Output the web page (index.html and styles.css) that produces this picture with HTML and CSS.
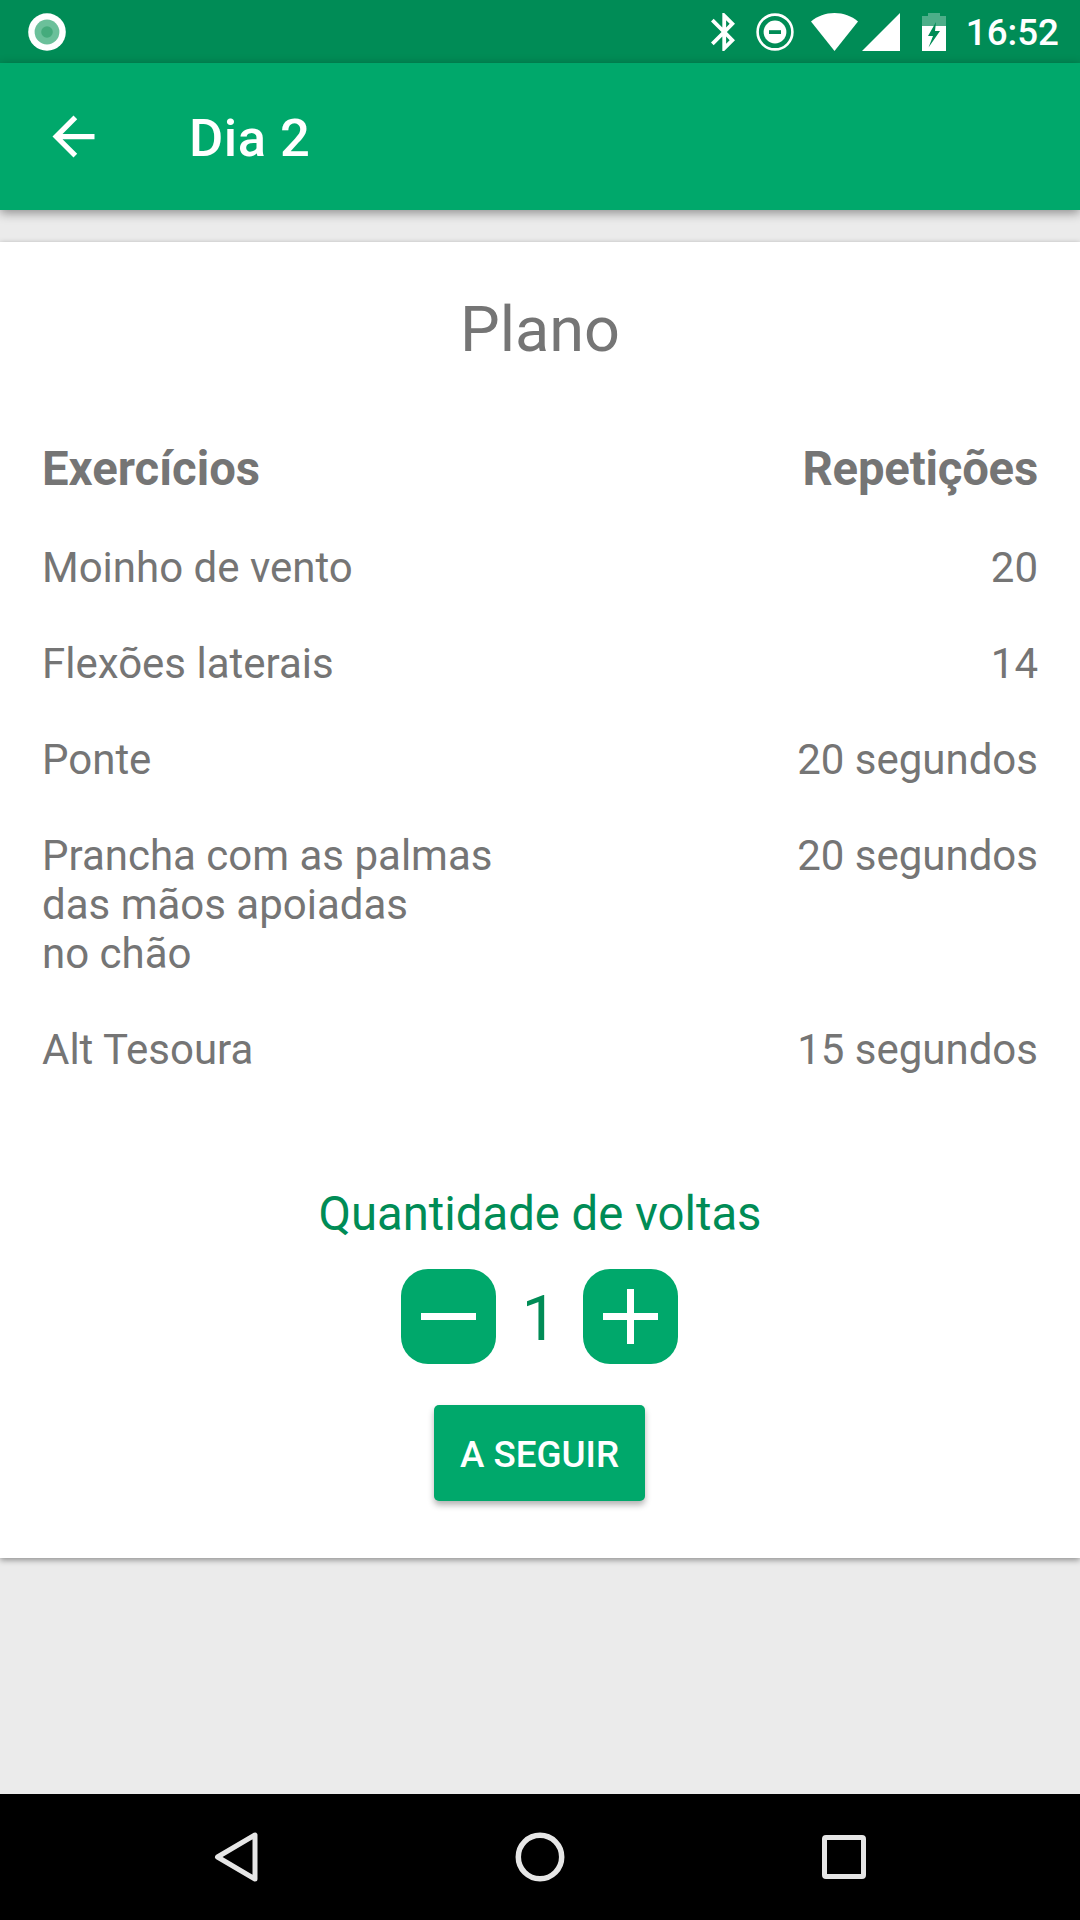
FILE: index.html
```html
<!DOCTYPE html>
<html lang="pt-BR">
<head>
    <meta charset="UTF-8">
    <meta name="viewport" content="width=device-width, initial-scale=1.0">
    <title>Dia 2</title>
    <link rel="stylesheet" href="styles.css">
</head>
<body>
    <div class="status-bar">
        <svg class="icon-record" width="38" height="38" viewBox="0 0 38 38">
            <circle cx="19" cy="19" r="18.8" fill="#fff"/>
            <circle cx="19" cy="19" r="12.4" fill="#6bc09a"/>
            <circle cx="19" cy="19" r="5.8" fill="#45ab7c"/>
        </svg>
        <div class="status-icons">
            <svg class="icon-bluetooth" width="24" height="38" viewBox="5 2 12.71 20" preserveAspectRatio="none" fill="#fff">
                <path d="M17.71 7.71L12 2h-1v7.59L6.41 5 5 6.41 10.59 12 5 17.59 6.41 19 11 14.41V22h1l5.71-5.71-4.3-4.29 4.3-4.29zM13 5.83l1.88 1.88L13 9.59V5.83zm1.88 10.46L13 18.17v-3.76l1.88 1.88z"/>
            </svg>
            <svg class="icon-dnd" width="38" height="38" viewBox="0 0 38 38">
                <circle cx="19" cy="19" r="17.4" fill="none" stroke="#fff" stroke-width="2.6"/>
                <circle cx="19" cy="19" r="11.4" fill="#fff"/>
                <rect x="13" y="17.2" width="12" height="3.8" fill="#008c56"/>
            </svg>
            <svg class="icon-wifi" width="47" height="38" viewBox="0 0 47 38">
                <path d="M0 8.5C6.500 3 14.500 0 23.500 0S40.500 3 47 8.500L23.500 38z" fill="#fff"/>
            </svg>
            <svg class="icon-signal" width="38" height="38" viewBox="0 0 38 38">
                <path d="M38 0v38H0z" fill="#fff"/>
            </svg>
            <svg class="icon-battery" width="24" height="38" viewBox="0 0 24 38">
                <path d="M6 0h12v3h6v10H0V3h6z" fill="#fff" fill-opacity=".3"/>
                <path d="M0 13h24v25H0z" fill="#fff"/>
                <path d="M14 9L6 23h5l-4.500 11.500L18 18h-5z" fill="#008c56"/>
            </svg>
            <span class="clock">16:52</span>
        </div>
    </div>

    <header class="app-bar">
        <svg class="icon-back" width="63" height="63" viewBox="0 0 24 24" fill="#fff">
            <path d="M20 11H7.830l5.590-5.590L12 4l-8 8 8 8 1.410-1.410L7.830 13H20v-2z"/>
        </svg>
        <h1>Dia 2</h1>
    </header>

    <main class="content">
        <section class="card">
            <h2>Plano</h2>

            <div class="plan">
                <div class="row row-head"><span>Exercícios</span><span class="reps">Repetições</span></div>
                <div class="row"><span>Moinho de vento</span><span>20</span></div>
                <div class="row"><span>Flexões laterais</span><span>14</span></div>
                <div class="row"><span>Ponte</span><span>20 segundos</span></div>
                <div class="row"><span>Prancha com as palmas<br>das mãos apoiadas<br>no chão</span><span>20 segundos</span></div>
                <div class="row"><span>Alt Tesoura</span><span>15 segundos</span></div>
            </div>

            <div class="laps-label">Quantidade de voltas</div>
            <div class="laps">
                <button class="step-btn" aria-label="Menos">
                    <svg width="95" height="95" viewBox="0 0 95 95"><path d="M20 47.500h55" stroke="#fff" stroke-width="7"/></svg>
                </button>
                <span class="laps-count">1</span>
                <button class="step-btn" aria-label="Mais">
                    <svg width="95" height="95" viewBox="0 0 95 95"><path d="M20 47.500h55M47.500 20v55" stroke="#fff" stroke-width="7"/></svg>
                </button>
            </div>

            <button class="next-btn">A SEGUIR</button>
        </section>
    </main>

    <nav class="nav-bar">
        <svg width="50" height="50" viewBox="0 0 50 50" fill="none" stroke="#e6e6e6" stroke-width="5" stroke-linejoin="round">
            <path d="M44 3v44L6.500 25z"/>
        </svg>
        <svg width="50" height="50" viewBox="0 0 50 50" fill="none" stroke="#e6e6e6" stroke-width="5.500">
            <circle cx="25" cy="25" r="21.700"/>
        </svg>
        <svg width="50" height="50" viewBox="0 0 50 50" fill="none" stroke="#e6e6e6" stroke-width="5">
            <rect x="5.500" y="5.500" width="39" height="39" rx="1.500"/>
        </svg>
    </nav>
</body>
</html>
```
FILE: styles.css
```css
* {
    box-sizing: border-box;
}
body {
    margin: 0;
    height: 1920px;
    display: flex;
    flex-direction: column;
    font-family: Roboto, sans-serif;
    color: #757575;
    background: #ebebeb;
}
svg {
    display: block;
    flex-shrink: 0;
}
h1, h2 {
    margin: 0;
}
button {
    border: none;
    padding: 0;
    font-family: inherit;
    color: white;
    background: #00a86b;
}

.status-bar {
    height: 63px;
    flex-shrink: 0;
    display: flex;
    align-items: center;
    justify-content: space-between;
    padding: 0 21px 0 28px;
    background: #008c56;
}
.status-icons {
    display: flex;
    align-items: center;
}
.icon-dnd {
    margin-left: 21px;
}
.icon-wifi {
    margin-left: 17px;
}
.icon-signal {
    margin-left: 4px;
}
.icon-battery {
    margin-left: 22px;
}
.clock {
    margin-left: 20px;
    padding-top: 2px;
    font-size: 36.75px;
    font-weight: 500;
    line-height: 43px;
    color: white;
}

.app-bar {
    height: 147px;
    flex-shrink: 0;
    display: flex;
    align-items: center;
    padding-left: 42px;
    color: white;
    background: #00a86b;
    box-shadow: 0 3px 10px rgba(0,0,0,0.4);
}
.app-bar h1 {
    margin-left: 84px;
    padding-top: 2px;
    font-size: 52.5px;
    font-weight: 500;
    letter-spacing: 0.5px;
}

.content {
    flex: 1;
    padding-top: 32px;
}
.card {
    height: 1316px;
    display: flex;
    flex-direction: column;
    align-items: center;
    padding: 51px 42px 0;
    background: white;
    box-shadow: 0 2px 6px rgba(0,0,0,0.4);
}
.card h2 {
    font-size: 63px;
    font-weight: 400;
    line-height: 74px;
}

.plan {
    width: 100%;
    margin-top: 74px;
    display: flex;
    flex-direction: column;
    gap: 47px;
}
.row {
    display: flex;
    justify-content: space-between;
    font-size: 42px;
    line-height: 49px;
}
.row-head {
    margin-bottom: -1px;
    font-size: 47.25px;
    font-weight: bold;
    line-height: 56px;
}
.reps {
    letter-spacing: -0.2px;
}

.laps-label {
    margin-top: 112px;
    font-size: 47.25px;
    line-height: 56px;
    color: #008c56;
}
.laps {
    display: flex;
    align-items: center;
    margin-top: 27px;
    margin-right: 1px;
}
.step-btn {
    width: 95px;
    height: 95px;
    border-radius: 27px;
}
.laps-count {
    width: 87px;
    padding-top: 5px;
    text-align: center;
    font-size: 63px;
    line-height: 74px;
    color: #008c56;
}
.next-btn {
    width: 211px;
    height: 96px;
    margin-top: 41px;
    margin-right: 1px;
    padding-top: 2px;
    border-radius: 5px;
    font-size: 36.75px;
    font-weight: 500;
    box-shadow: 0 4px 6px rgba(0,0,0,0.3);
}

.nav-bar {
    height: 126px;
    flex-shrink: 0;
    display: flex;
    align-items: center;
    justify-content: center;
    gap: 254px;
    background: black;
}
```
